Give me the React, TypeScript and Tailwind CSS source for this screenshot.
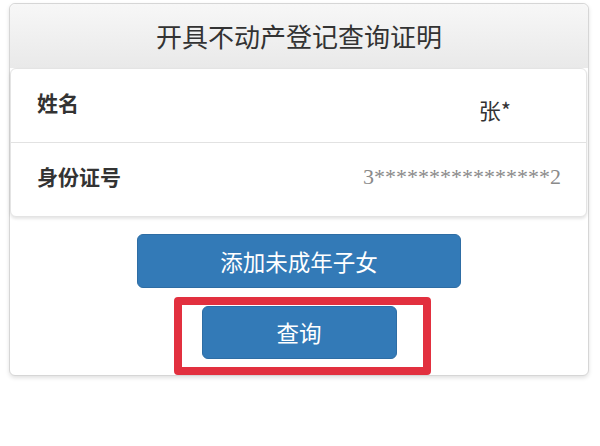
import React from "react";

const font = { fontFamily: '"Noto Sans CJK SC", "Noto Sans", sans-serif' };

export default function App() {
  return (
    <div className="w-[600px] h-[446px] bg-white pt-[3px]" style={font}>
      <div className="ml-[9px] w-[580px] border border-[#d6d6d6] rounded-[6px] bg-white shadow-[0_2px_4px_rgba(0,0,0,0.12)]">
        <div className="h-[64px] rounded-t-[6px] bg-gradient-to-b from-[#f7f7f7] to-[#e9e9e9] flex items-center justify-center text-[26px] text-[#333] leading-none">
          开具不动产登记查询证明
        </div>
        <div className="ml-[0px] mr-[1px] bg-white rounded-[6px] border border-[#e4e4e4] shadow-[0_2px_3px_rgba(0,0,0,0.10)]">
          <div className="h-[74px] flex items-center justify-between border-b border-[#e2e2e2]">
            <span className="ml-[26px] mb-[6px] text-[21px] font-bold text-[#333] leading-none">姓名</span>
            <span className="mr-[75px] mt-[6px] text-[22px] text-[#333] leading-none">张*</span>
          </div>
          <div className="h-[73px] flex items-center justify-between">
            <span className="ml-[26px] mb-[6px] text-[21px] font-bold text-[#333] leading-none">身份证号</span>
            <span
              className="mr-[25px] mb-[6px] text-[22px] text-[#8a8a8a] leading-none"
              style={{ fontFamily: '"Liberation Serif", serif' }}
            >
              3****************2
            </span>
          </div>
        </div>
        <div className="relative flex flex-col items-center pt-[17px] pb-[16px] gap-[18px]">
          <button className="w-[324px] h-[54px] rounded-[6px] bg-[#337ab7] border border-[#2e6da4] text-white text-[22.5px] leading-none">
            添加未成年子女
          </button>
          <button className="w-[195px] h-[53px] rounded-[6px] bg-[#337ab7] border border-[#2e6da4] text-white text-[22.5px] leading-none">
            查询
          </button>
          <div className="absolute left-[164px] top-[80px] w-[257px] h-[78px] border-[8px] border-[#e2303f] rounded-[4px] pointer-events-none" />
        </div>
      </div>
    </div>
  );
}
